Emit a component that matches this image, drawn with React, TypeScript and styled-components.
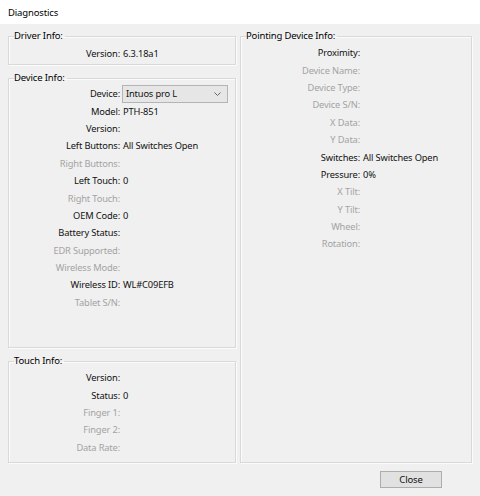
import React from "react";
import styled, { createGlobalStyle } from "styled-components";

const GlobalStyle = createGlobalStyle`
  html, body {
    margin: 0;
    padding: 0;
    background: #f0f0f0;
  }
  body {
    font-family: "Noto Sans", "Open Sans", sans-serif;
    font-size: 9.3px;
    letter-spacing: -0.15px;
    color: #111;
  }
`;

const Window = styled.div`
  width: 480px;
  height: 496px;
  display: flex;
  flex-direction: column;
  background: #f0f0f0;
  overflow: hidden;
`;

const TitleBar = styled.div`
  height: 24px;
  flex: none;
  background: #ffffff;
  display: flex;
  align-items: center;
  padding-left: 8px;
  font-size: 9.5px;
  color: #000;
`;

const Body = styled.div`
  flex: 1;
  display: flex;
  flex-direction: column;
  padding: 6px 8px 8px 8px;
`;

const Columns = styled.div`
  display: grid;
  grid-template-columns: 228px 232px;
  gap: 4px;
  height: 433px;
`;

const Column = styled.div`
  display: flex;
  flex-direction: column;
  gap: 7px;
  min-height: 0;
`;

const Group = styled.fieldset<{ $height?: number }>`
  margin: 0;
  padding: 0;
  min-width: 0;
  border: 1px solid #d9d9d9;
  box-shadow: inset 1px 1px 0 #fbfbfb, 1px 1px 0 #fbfbfb;
  ${(p) => (p.$height ? `height: ${p.$height}px; flex: none;` : "flex: 1;")}
  display: block;
`;

const Legend = styled.legend`
  padding: 0 2px 0 0;
  margin-left: 5px;
  font-size: 9.5px;
  line-height: 12px;
  color: #000;
`;

const Rows = styled.div<{ $labelWidth: number; $top: number }>`
  display: grid;
  grid-template-columns: ${(p) => p.$labelWidth}px 1fr;
  grid-auto-rows: 17.4px;
  align-items: center;
  column-gap: 3px;
  padding-top: ${(p) => p.$top}px;
`;

const Label = styled.span<{ $off?: boolean }>`
  text-align: right;
  white-space: nowrap;
  color: ${(p) => (p.$off ? "#a3a3a3" : "#111")};
`;

const Value = styled.span`
  white-space: nowrap;
  color: #111;
`;

const Combo = styled.div`
  width: 106px;
  height: 18px;
  box-sizing: border-box;
  border: 1px solid #b4b4b4;
  background: #e6e6e6;
  display: flex;
  align-items: center;
  justify-content: space-between;
  padding: 0 6px 0 3px;
  margin-left: -1px;
`;

const Footer = styled.div`
  display: flex;
  justify-content: flex-end;
  padding-top: 8px;
  padding-right: 30px;
`;

const Button = styled.button`
  width: 62px;
  height: 17px;
  box-sizing: border-box;
  border: 1px solid #adadad;
  background: #e1e1e1;
  font-family: inherit;
  font-size: 9.5px;
  letter-spacing: inherit;
  color: #111;
  padding: 0;
`;

type Row = { label: string; value?: string; off?: boolean; combo?: boolean };

const deviceRows: Row[] = [
  { label: "Device:", value: "Intuos pro L", combo: true },
  { label: "Model:", value: "PTH-851" },
  { label: "Version:" },
  { label: "Left Buttons:", value: "All Switches Open" },
  { label: "Right Buttons:", off: true },
  { label: "Left Touch:", value: "0" },
  { label: "Right Touch:", off: true },
  { label: "OEM Code:", value: "0" },
  { label: "Battery Status:" },
  { label: "EDR Supported:", off: true },
  { label: "Wireless Mode:", off: true },
  { label: "Wireless ID:", value: "WL#C09EFB" },
  { label: "Tablet S/N:", off: true },
];

const touchRows: Row[] = [
  { label: "Version:" },
  { label: "Status:", value: "0" },
  { label: "Finger 1:", off: true },
  { label: "Finger 2:", off: true },
  { label: "Data Rate:", off: true },
];

const pointingRows: Row[] = [
  { label: "Proximity:" },
  { label: "Device Name:", off: true },
  { label: "Device Type:", off: true },
  { label: "Device S/N:", off: true },
  { label: "X Data:", off: true },
  { label: "Y Data:", off: true },
  { label: "Switches:", value: "All Switches Open" },
  { label: "Pressure:", value: "0%" },
  { label: "X Tilt:", off: true },
  { label: "Y Tilt:", off: true },
  { label: "Wheel:", off: true },
  { label: "Rotation:", off: true },
];

const Chevron = () => (
  <svg width="7" height="4" viewBox="0 0 7 4">
    <path d="M0.5 0.5 L3.5 3.5 L6.5 0.5" fill="none" stroke="#666" strokeWidth="1" />
  </svg>
);

const InfoRows: React.FC<{ rows: Row[]; labelWidth: number; top: number }> = ({
  rows,
  labelWidth,
  top,
}) => (
  <Rows $labelWidth={labelWidth} $top={top}>
    {rows.map((r) => (
      <React.Fragment key={r.label}>
        <Label $off={r.off}>{r.label}</Label>
        {r.combo ? (
          <Combo>
            <Value>{r.value}</Value>
            <Chevron />
          </Combo>
        ) : (
          <Value>{r.value ?? ""}</Value>
        )}
      </React.Fragment>
    ))}
  </Rows>
);

export default function App() {
  return (
    <Window>
      <GlobalStyle />
      <TitleBar>Diagnostics</TitleBar>
      <Body>
        <Columns>
          <Column>
            <Group $height={33}>
              <Legend>Driver Info:</Legend>
              <InfoRows rows={[{ label: "Version:", value: "6.3.18a1" }]} labelWidth={111} top={3} />
            </Group>
            <Group>
              <Legend>Device Info:</Legend>
              <InfoRows rows={deviceRows} labelWidth={111} top={1} />
            </Group>
            <Group $height={106}>
              <Legend>Touch Info:</Legend>
              <InfoRows rows={touchRows} labelWidth={111} top={2} />
            </Group>
          </Column>
          <Column>
            <Group>
              <Legend>Pointing Device Info:</Legend>
              <InfoRows rows={pointingRows} labelWidth={119} top={2} />
            </Group>
          </Column>
        </Columns>
        <Footer>
          <Button>Close</Button>
        </Footer>
      </Body>
    </Window>
  );
}
